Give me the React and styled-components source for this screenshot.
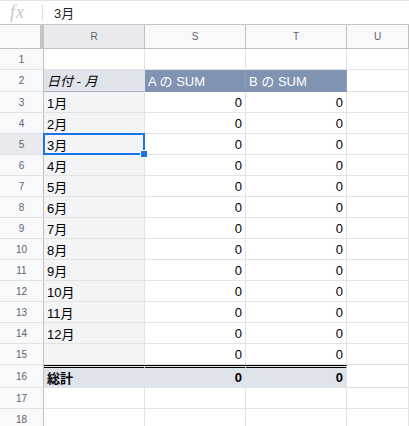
import React from "react";
import styled, { createGlobalStyle, css } from "styled-components";

const GlobalStyle = createGlobalStyle`
  html, body {
    margin: 0;
    padding: 0;
    background: #fff;
  }
  body {
    font-family: "Liberation Sans", Arial, "Noto Sans CJK JP", sans-serif;
    width: 409px;
    height: 426px;
    overflow: hidden;
  }
`;

const Sheet = styled.div`
  width: 409px;
  height: 426px;
  overflow: hidden;
  background: #fff;
`;

const FormulaBar = styled.div`
  display: flex;
  align-items: center;
  border-top: 1px solid #e3e3e3;
  border-bottom: 1px solid #c7c7c7;
  box-sizing: border-box;
  height: 25px;
`;

const FxLabel = styled.div`
  width: 43px;
  box-sizing: border-box;
  padding-left: 10px;
  font-family: "Liberation Serif", "DejaVu Serif", serif;
  font-style: italic;
  font-size: 18px;
  color: #c8c8c8;
  letter-spacing: 1px;
  border-right: 1px solid #dadce0;
  height: 15px;
  line-height: 14px;
`;

const FormulaText = styled.div`
  padding-left: 11px;
  font-size: 13px;
  color: #222;
`;

const Grid = styled.div`
  display: grid;
  grid-template-columns: 44px 101px 101px 101px 62px;
  grid-template-rows: 24px 21px 22px repeat(13, 21px) 23px 21px 21px;
`;

const Corner = styled.div`
  box-sizing: border-box;
  background: #f8f9fa;
  border-bottom: 1px solid #c0c0c0;
  border-right: 4px solid #c4c4c4;
`;

const ColHead = styled.div`
  box-sizing: border-box;
  display: flex;
  align-items: center;
  justify-content: center;
  font-size: 10px;
  color: #5f6368;
  background: ${(p) => (p.$active ? "#e8eaed" : "#f8f9fa")};
  border-right: 1px solid #c0c0c0;
  border-bottom: 1px solid #c0c0c0;
`;

const RowHead = styled.div`
  box-sizing: border-box;
  display: flex;
  align-items: center;
  justify-content: center;
  font-size: 10px;
  color: #5f6368;
  background: ${(p) => (p.$active ? "#e8eaed" : "#f8f9fa")};
  border-right: 1px solid #c0c0c0;
  border-bottom: 1px solid #e2e3e3;
`;

const variants = {
  plain: css`
    background: #fff;
  `,
  label: css`
    background: #f3f4f6;
    color: #000;
  `,
  dateHead: css`
    background: #dfe3ea;
    font-style: italic;
    border-bottom-color: #a7b3c7;
  `,
  sumHead: css`
    background: #8193b2;
    color: #fff;
    border-right-color: #8d9dba;
    border-bottom-color: #8193b2;
  `,
  total: css`
    background: #dfe3ea;
    font-weight: bold;
    border-top: 3px double #000;
  `,
};

const Cell = styled.div`
  position: relative;
  box-sizing: border-box;
  display: flex;
  align-items: center;
  justify-content: ${(p) => (p.$right ? "flex-end" : "flex-start")};
  padding: 0 3px;
  font-size: 13px;
  color: #000;
  white-space: nowrap;
  border-right: 1px solid #e2e3e3;
  border-bottom: 1px solid #e2e3e3;
  ${(p) => variants[p.$variant || "plain"]}
  ${(p) =>
    p.$selected &&
    css`
      &::after {
        content: "";
        position: absolute;
        left: -1px;
        top: -1px;
        right: -1px;
        bottom: -1px;
        border: 2px solid #1a73e8;
        pointer-events: none;
      }
    `}
`;

const FillHandle = styled.span`
  position: absolute;
  right: -4px;
  bottom: -4px;
  width: 6px;
  height: 6px;
  background: #1a73e8;
  border: 1px solid #fff;
  z-index: 2;
`;

const columns = ["R", "S", "T", "U"];
const months = ["1月", "2月", "3月", "4月", "5月", "6月", "7月", "8月", "9月", "10月", "11月", "12月", ""];

export default function App() {
  const selectedRow = 5;

  return (
    <Sheet>
      <GlobalStyle />
      <FormulaBar>
        <FxLabel>fx</FxLabel>
        <FormulaText>3月</FormulaText>
      </FormulaBar>
      <Grid>
        <Corner />
        {columns.map((c) => (
          <ColHead key={c} $active={c === "R"}>
            {c}
          </ColHead>
        ))}

        <RowHead>1</RowHead>
        <Cell />
        <Cell />
        <Cell />
        <Cell />

        <RowHead>2</RowHead>
        <Cell $variant="dateHead">日付 - 月</Cell>
        <Cell $variant="sumHead">A の SUM</Cell>
        <Cell $variant="sumHead">B の SUM</Cell>
        <Cell />

        {months.map((m, i) => {
          const row = i + 3;
          const selected = row === selectedRow;
          return (
            <React.Fragment key={row}>
              <RowHead $active={selected}>{row}</RowHead>
              <Cell $variant="label" $selected={selected}>
                {m}
                {selected && <FillHandle />}
              </Cell>
              <Cell $right>0</Cell>
              <Cell $right>0</Cell>
              <Cell />
            </React.Fragment>
          );
        })}

        <RowHead>16</RowHead>
        <Cell $variant="total">総計</Cell>
        <Cell $variant="total" $right>0</Cell>
        <Cell $variant="total" $right>0</Cell>
        <Cell />

        {[17, 18].map((r) => (
          <React.Fragment key={r}>
            <RowHead>{r}</RowHead>
            <Cell />
            <Cell />
            <Cell />
            <Cell />
          </React.Fragment>
        ))}
      </Grid>
    </Sheet>
  );
}
